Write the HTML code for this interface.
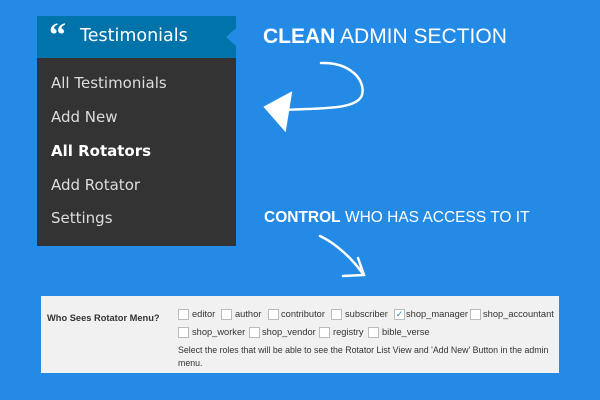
<!DOCTYPE html>
<html><head><style>
body{margin:0;width:600px;height:400px;background:#238be6;position:relative;overflow:hidden;font-family:"DejaVu Sans","Liberation Sans",sans-serif}
.menu{position:absolute;left:37px;top:16px;width:199px;height:230px;background:#333}
.hd{position:absolute;left:0;top:0;width:199px;height:42px;background:#0073aa;color:#fff;font-size:17.5px}
.hd span{position:absolute;top:10px}
.notch{position:absolute;right:0;top:12px;width:0;height:0;border-top:9px solid transparent;border-bottom:9px solid transparent;border-right:10px solid #238be6}
.it{position:absolute;left:14px;color:#ddd;font-size:15px}
.b{font-weight:bold;color:#fff}
.t{position:absolute;color:#fff;font-family:"Liberation Sans",sans-serif}
.panel{position:absolute;left:41px;top:296px;width:518px;height:77px;background:#f1f1f1;font-size:9.3px;color:#333;font-family:"Liberation Sans",sans-serif}
.cb{position:absolute;width:9px;height:9px;border:1px solid #bbb;background:#fff}
.l{position:absolute;white-space:nowrap}
</style></head><body>
<div class="menu">
<div class="hd"><span style="left:12px;font-weight:bold;font-family:'Liberation Serif',serif;font-size:34px;top:1px;letter-spacing:-2px">“</span><span style="left:43px">Testimonials</span><div class="notch"></div></div>
<div class="it" style="top:58px">All Testimonials</div>
<div class="it" style="top:92px">Add New</div>
<div class="it b" style="top:126px">All Rotators</div>
<div class="it" style="top:160px">Add Rotator</div>
<div class="it" style="top:193px">Settings</div>
</div>
<div class="t" style="left:263px;top:25px;font-size:21px"><b>CLEAN</b> ADMIN SECTION</div>
<div class="t" style="left:264px;top:209px;font-size:15.5px"><b>CONTROL</b> WHO HAS ACCESS TO IT</div>
<svg style="position:absolute;left:0;top:0" width="600" height="400" fill="none" stroke="#fff" stroke-width="2.5" stroke-linecap="round">
<path d="M321 63 C350 62 366 80 362 95 C357 110 320 108 285 110"/>
<path d="M265 107 L291 93 L285 130 Z" fill="#fff" stroke-width="2"/>
<path d="M320 236 C335 243 352 258 363 274"/>
<path d="M343 276 L364 275 L358 258"/>
</svg>
<div class="panel">
<div class="l" style="left:6px;top:17px;font-weight:bold">Who Sees Rotator Menu?</div>
<div class="cb" style="left:137px;top:13px"></div><div class="l" style="left:151px;top:13px">editor</div>
<div class="cb" style="left:180px;top:13px"></div><div class="l" style="left:194px;top:13px">author</div>
<div class="cb" style="left:227px;top:13px"></div><div class="l" style="left:240px;top:13px">contributor</div>
<div class="cb" style="left:290px;top:13px"></div><div class="l" style="left:304px;top:13px">subscriber</div>
<div class="cb" style="left:353px;top:13px;color:#1e8cbe;font-size:9px;line-height:9px;text-align:center">✓</div><div class="l" style="left:365px;top:13px">shop_manager</div>
<div class="cb" style="left:429px;top:13px"></div><div class="l" style="left:442px;top:13px">shop_accountant</div>
<div class="cb" style="left:137px;top:31px"></div><div class="l" style="left:151px;top:31px">shop_worker</div>
<div class="cb" style="left:208px;top:31px"></div><div class="l" style="left:221px;top:31px">shop_vendor</div>
<div class="cb" style="left:278px;top:31px"></div><div class="l" style="left:292px;top:31px">registry</div>
<div class="cb" style="left:327px;top:31px"></div><div class="l" style="left:341px;top:31px">bible_verse</div>
<div class="l" style="left:137px;top:48px;line-height:13px;font-size:8.8px">Select the roles that will be able to see the Rotator List View and 'Add New' Button in the admin<br>menu.</div>
</div>
</body></html>
